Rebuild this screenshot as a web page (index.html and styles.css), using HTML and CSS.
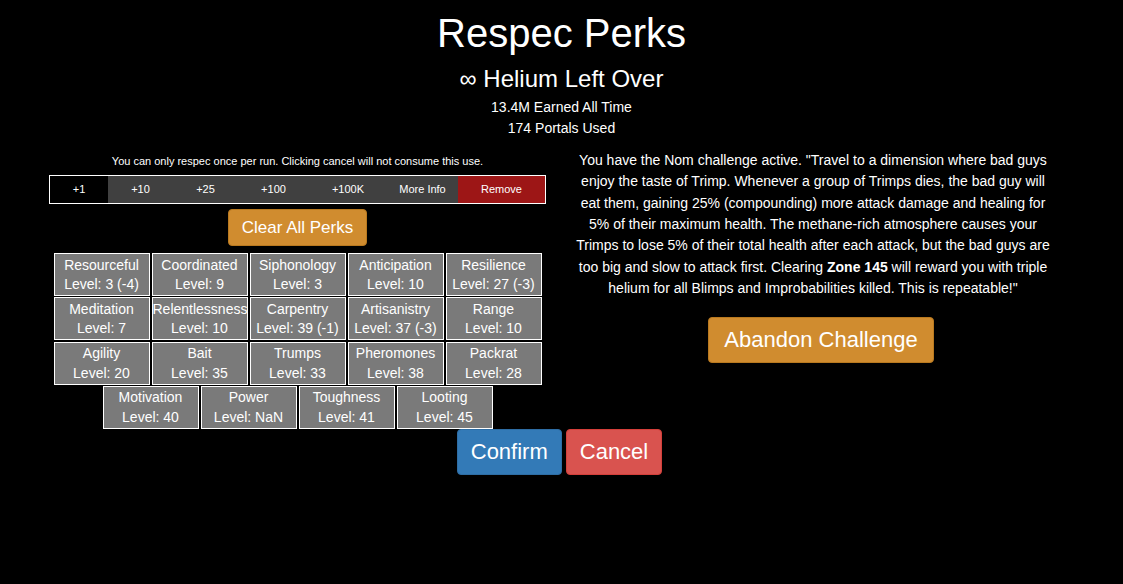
FILE: index.html
```html
<!DOCTYPE html>
<html>
<head>
<meta charset="utf-8">
<title>Respec Perks</title>
<link rel="stylesheet" href="styles.css">
</head>
<body>
<div class="header">
  <h1 class="title">Respec Perks</h1>
  <div class="helium">∞ Helium Left Over</div>
  <div class="stat">13.4M Earned All Time</div>
  <div class="stat">174 Portals Used</div>
</div>
<div class="columns">
  <div class="left">
    <div class="note">You can only respec once per run. Clicking cancel will not consume this use.</div>
    <div class="bar">
      <div class="tab tab-active">+1</div>
      <div class="tab">+10</div>
      <div class="tab">+25</div>
      <div class="tab">+100</div>
      <div class="tab">+100K</div>
      <div class="tab">More Info</div>
      <div class="tab tab-remove">Remove</div>
    </div>
    <div class="clear-row"><div class="btn btn-orange btn-clear">Clear All Perks</div></div>
    <div class="perks">
      <div class="perk">Resourceful<br>Level: 3 (-4)</div>
      <div class="perk">Coordinated<br>Level: 9</div>
      <div class="perk">Siphonology<br>Level: 3</div>
      <div class="perk">Anticipation<br>Level: 10</div>
      <div class="perk">Resilience<br>Level: 27 (-3)</div>
      <div class="perk">Meditation<br>Level: 7</div>
      <div class="perk">Relentlessness<br>Level: 10</div>
      <div class="perk">Carpentry<br>Level: 39 (-1)</div>
      <div class="perk">Artisanistry<br>Level: 37 (-3)</div>
      <div class="perk">Range<br>Level: 10</div>
      <div class="perk">Agility<br>Level: 20</div>
      <div class="perk">Bait<br>Level: 35</div>
      <div class="perk">Trumps<br>Level: 33</div>
      <div class="perk">Pheromones<br>Level: 38</div>
      <div class="perk">Packrat<br>Level: 28</div>
      <div class="perk">Motivation<br>Level: 40</div>
      <div class="perk">Power<br>Level: NaN</div>
      <div class="perk">Toughness<br>Level: 41</div>
      <div class="perk">Looting<br>Level: 45</div>
    </div>
  </div>
  <div class="right">
    <p class="challenge">You have the Nom challenge active. "Travel to a dimension where bad guys enjoy the taste of Trimp. Whenever a group of Trimps dies, the bad guy will eat them, gaining 25% (compounding) more attack damage and healing for 5% of their maximum health. The methane-rich atmosphere causes your Trimps to lose 5% of their total health after each attack, but the bad guys are too big and slow to attack first. Clearing <b>Zone 145</b> will reward you with triple helium for all Blimps and Improbabilities killed. This is repeatable!"</p>
    <div class="abandon-row"><div class="btn btn-orange btn-abandon">Abandon Challenge</div></div>
  </div>
</div>
<div class="actions">
  <div class="btn btn-big btn-blue">Confirm</div>
  <div class="btn btn-big btn-red">Cancel</div>
</div>
</body>
</html>
```

FILE: styles.css
```css
html, body {
  margin: 0;
  padding: 0;
  background: #000;
  color: #fff;
  font-family: "Liberation Sans", Arial, sans-serif;
}

.header {
  padding-top: 11px;
  text-align: center;
}

.title {
  margin: 0;
  font-size: 40px;
  line-height: 44px;
  font-weight: normal;
}

.helium {
  margin-top: 11px;
  font-size: 24px;
  line-height: 26px;
}

.stat {
  font-size: 14px;
  line-height: 21px;
}

.helium + .stat {
  margin-top: 5px;
}

.columns {
  display: flex;
  align-items: flex-start;
  padding-left: 49px;
  gap: 25px;
}

.left {
  width: 497px;
  padding-top: 16px;
}

.note {
  font-size: 11px;
  line-height: 13px;
  text-align: center;
  margin-bottom: 7px;
}

.bar {
  display: grid;
  grid-template-columns: 58px 65px 65px 71px 78px 71px 1fr;
  border: 1px solid #fff;
  height: 27px;
}

.tab {
  background: #404040;
  font-size: 11px;
  line-height: 27px;
  text-align: center;
}

.tab-active {
  background: #000;
}

.tab-remove {
  background: #9d1616;
}

.clear-row {
  display: flex;
  justify-content: center;
  margin-top: 5px;
}

.btn {
  border-radius: 4px;
  border: 1px solid transparent;
  color: #fff;
  text-align: center;
}

.btn-orange {
  background: #d08c2f;
  border-color: #b9791f;
}

.btn-clear {
  font-size: 17px;
  line-height: 20px;
  padding: 7.5px 13px;
}

.perks {
  display: flex;
  flex-wrap: wrap;
  justify-content: center;
  gap: 1.33px 2px;
  margin-top: 7px;
  padding: 0 4px;
}

.perk {
  box-sizing: border-box;
  width: 96px;
  height: 43px;
  padding-top: 1.5px;
  border: 1px solid #fff;
  background: #7a7a7a;
  font-size: 14px;
  line-height: 19.5px;
  text-align: center;
  white-space: nowrap;
}

.right {
  width: 484px;
  padding-top: 11px;
}

.challenge {
  margin: 0;
  font-size: 14px;
  line-height: 21.33px;
  text-align: center;
}

.abandon-row {
  display: flex;
  justify-content: center;
  padding-left: 16px;
  margin-top: 18px;
}

.btn-abandon {
  font-size: 22px;
  line-height: 24px;
  padding: 10px 15px;
}

.actions {
  display: flex;
  justify-content: center;
  gap: 4px;
  margin-top: 0;
  padding-right: 4px;
}

.btn-big {
  font-size: 22px;
  line-height: 24px;
  padding: 10px 13px;
}

.btn-blue {
  background: #337ab7;
  border-color: #2e6da4;
}

.btn-red {
  background: #d9534f;
  border-color: #d43f3a;
}
```
